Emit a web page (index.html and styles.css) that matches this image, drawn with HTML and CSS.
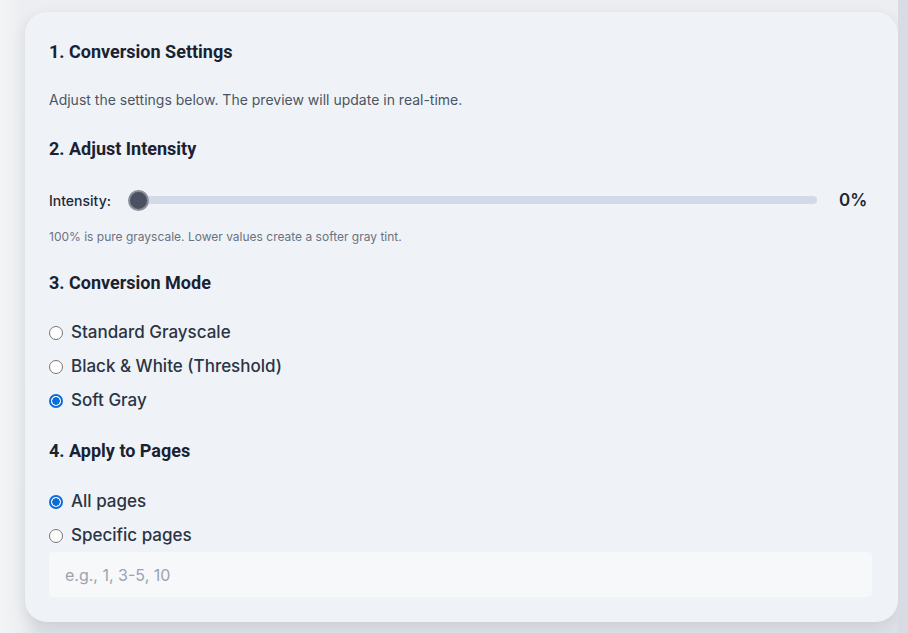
FILE: index.html
```html
<!DOCTYPE html>
<html>
<head>
<meta charset="utf-8">
<link rel="stylesheet" href="styles.css">
</head>
<body>
<div class="page">
  <div class="card">
    <h2 class="title t1">1. Conversion Settings</h2>
    <p class="desc">Adjust the settings below. The preview will update in real-time.</p>
    <h2 class="title t2">2. Adjust Intensity</h2>
    <div class="slider-row">
      <span class="slider-label">Intensity:</span>
      <div class="track"><span class="thumb"></span></div>
      <span class="value">0%</span>
    </div>
    <p class="hint">100% is pure grayscale. Lower values create a softer gray tint.</p>
    <h2 class="title t3">3. Conversion Mode</h2>
    <div class="radios">
      <label class="radio"><span class="dot"></span>Standard Grayscale</label>
      <label class="radio"><span class="dot"></span>Black &amp; White (Threshold)</label>
      <label class="radio"><span class="dot on"></span>Soft Gray</label>
    </div>
    <h2 class="title t4">4. Apply to Pages</h2>
    <div class="radios">
      <label class="radio"><span class="dot on"></span>All pages</label>
      <label class="radio"><span class="dot"></span>Specific pages</label>
    </div>
    <div class="input">e.g., 1, 3-5, 10</div>
  </div>
  <div class="strip"></div>
</div>
</body>
</html>
```
FILE: styles.css
```css
* { box-sizing: border-box; }
html, body { margin: 0; padding: 0; }
body {
  width: 908px;
  height: 633px;
  overflow: hidden;
  background: linear-gradient(to bottom, #eceef1 0%, #e6e8ec 90%, #dde0e6 100%);
  font-family: Inter, "Noto Sans", sans-serif;
  color: #1f2937;
}
.page {
  display: flex;
  height: 633px;
  padding: 12px 0 0 25px;
  background: linear-gradient(to right, #f4f4f5 0, #f1f2f4 8px, #eceef1 20px, transparent 40px);
}
.card {
  width: 873px;
  height: 610px;
  background: #eff3f7;
  border-radius: 22px;
  padding: 28px 25px 0 24px;
  box-shadow: 0 4px 14px rgba(30, 40, 60, 0.10);
  display: flex;
  flex-direction: column;
}
.strip {
  flex: 1;
  margin-top: -12px;
  background: #d8dbe2;
}
.title {
  margin: 0;
  font-family: Roboto, sans-serif;
  font-weight: 700;
  font-size: 18px;
  line-height: 24px;
  color: #1a2232;
}
.desc {
  margin: 26px 0 0;
  font-size: 14px;
  line-height: 20px;
  color: #4b5563;
}
.t2 { margin-top: 27px; }
.slider-row {
  display: flex;
  align-items: center;
  margin-top: 26px;
  height: 26px;
}
.slider-label {
  font-size: 14px;
  font-weight: 500;
  color: #1f2937;
  width: 79px;
}
.track {
  position: relative;
  width: 689px;
  height: 8px;
  border-radius: 4px;
  background: #d2d9e7;
}
.thumb {
  position: absolute;
  left: 0;
  top: -6px;
  width: 21px;
  height: 21px;
  border-radius: 50%;
  background: #4b5162;
  border: 2px solid #8a8f99;
}
.value {
  margin-left: 22px;
  font-size: 17px;
  font-weight: 600;
  color: #1f2937;
}
.hint {
  margin: 16px 0 0;
  font-size: 12px;
  line-height: 16px;
  color: #6b7280;
}
.t3 { margin-top: 26px; }
.radios {
  display: flex;
  flex-direction: column;
  gap: 11px;
  margin-top: 26px;
}
.radio {
  display: flex;
  align-items: center;
  font-size: 17px;
  font-weight: 500;
  line-height: 23px;
  color: #2b3444;
}
.dot {
  width: 14px;
  height: 14px;
  border-radius: 50%;
  border: 1px solid #767676;
  background: #fff;
  margin-right: 8px;
  flex: none;
}
.dot.on {
  border: 2px solid #0b6bd9;
  background: radial-gradient(circle, #0b6bd9 0 3.5px, #fff 4px);
}
.t4 { margin-top: 27px; }
.t4 + .radios { margin-top: 27px; }
.input {
  margin-top: 5px;
  height: 45px;
  width: 823px;
  background: #f6f8fa;
  border-radius: 4px;
  padding: 0 16px;
  display: flex;
  align-items: center;
  font-size: 16px;
  color: #9ca3af;
}
```
